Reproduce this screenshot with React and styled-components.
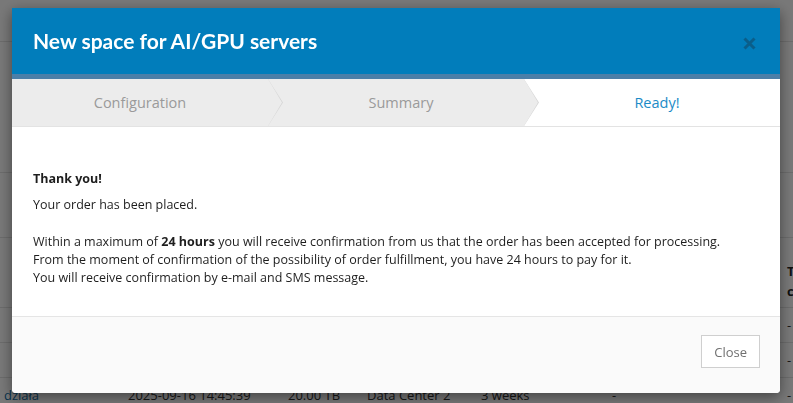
import styled, { createGlobalStyle } from "styled-components";

const GlobalStyle = createGlobalStyle`
    html, body {
        margin: 0;
        padding: 0;
        background: #fff;
        font-family: "Open Sans", "Liberation Sans", sans-serif;
        font-size: 13px;
        color: #333;
    }
`;

/* ---------- page behind the dialog ---------- */

const Page = styled.div`
    width: 793px;
    height: 403px;
    overflow: hidden;
    background: #fff;
`;

const TopBar = styled.div`
    height: 42px;
    border-bottom: 1px solid #e4e4e4;
    box-sizing: border-box;
`;

const Toolbar = styled.div`
    height: 131px;
    border-bottom: 1px solid #e4e4e4;
    box-sizing: border-box;
`;

const Filters = styled.div`
    height: 65px;
    border-bottom: 1px solid #e4e4e4;
    box-sizing: border-box;
`;

const cols = "124px 160px 79px 114px 131px 175px 1fr";

const HeadRow = styled.div`
    display: grid;
    grid-template-columns: ${cols};
    padding: 0 0 6px 4px;
    height: 70px;
    align-items: end;
    font-weight: 700;
    line-height: 20px;
    color: #222;
    border-bottom: 1px solid #e4e4e4;
    box-sizing: border-box;
    white-space: nowrap;
`;

const Row = styled.div`
    display: grid;
    grid-template-columns: ${cols};
    padding-left: 4px;
    height: 34px;
    align-items: center;
    border-bottom: 1px solid #e4e4e4;
    white-space: nowrap;
`;

const Link = styled.span`
    color: #0f6ba3;
`;

/* ---------- dialog ---------- */

const Backdrop = styled.div`
    position: fixed;
    inset: 0;
    background: rgba(0, 0, 0, 0.53);
    padding: 8px 0 0 12px;
`;

const Dialog = styled.div`
    width: 768px;
    background: #fff;
    border-radius: 0 0 4px 4px;
    box-shadow: 0 4px 14px rgba(0, 0, 0, 0.45);
    overflow: hidden;
`;

const Header = styled.div`
    height: 66px;
    background: #017dbb;
    border-bottom: 5px solid #4b7fa8;
    display: flex;
    align-items: center;
    justify-content: space-between;
    padding: 0 24px 0 21px;
`;

const Title = styled.h2`
    margin: 0 0 2px;
    font-family: "Lato", "Liberation Sans", sans-serif;
    font-weight: 700;
    font-size: 21px;
    color: #fff;
`;

const CloseX = styled.button`
    border: 0;
    background: none;
    padding: 0;
    margin-top: 5px;
    display: flex;
    cursor: pointer;
`;

const Steps = styled.div`
    display: flex;
    height: 47px;
    border-bottom: 1px solid #e3e3e3;
`;

const Step = styled.div`
    position: relative;
    box-sizing: border-box;
    flex: 0 0 33.3333%;
    display: flex;
    align-items: center;
    justify-content: center;
    background: ${({ active }) => (active ? "#fff" : "#ececec")};
    color: ${({ active }) => (active ? "#1b8bc7" : "#9a9a9a")};
    font-size: 14.5px;

    & + & {
        padding-left: 10px;
    }

    /* chevron: a border triangle with the fill triangle laid over it */
    &:not(:last-child)::before,
    &:not(:last-child)::after {
        content: "";
        position: absolute;
        top: 0;
        left: 100%;
        height: 100%;
        z-index: 1;
        clip-path: polygon(0 0, 100% 50%, 0 100%);
    }
    &:not(:last-child)::before {
        width: 15px;
        background: #d6d6d6;
    }
    &:not(:last-child)::after {
        width: 14px;
        background: ${({ active }) => (active ? "#fff" : "#ececec")};
    }
`;

const Body = styled.div`
    padding: 43px 21px 29px;
    font-size: 12.5px;
    line-height: 18px;
    color: #1e1e1e;
`;

const Para = styled.p`
    margin: ${({ spaced }) => (spaced ? "19px 0 0" : "0 0 8px")};
`;

const Footer = styled.div`
    border-top: 1px solid #e5e5e5;
    background: #fafafa;
    display: flex;
    justify-content: flex-end;
    padding: 18px 20px 25px;
`;

const Button = styled.button`
    height: 33px;
    padding: 0 12px;
    border: 1px solid #cfcfcf;
    background: #fff;
    color: #707070;
    font-family: "Open Sans", "Liberation Sans", sans-serif;
    font-size: 13px;
    cursor: pointer;
`;

const rows = [
    ["", "", "", "", "", "-", "-"],
    ["", "", "", "", "", "-", "-"],
    ["działa", "2025-09-16 14:45:39", "20.00 TB", "Data Center 2", "3 weeks", "-", "-"],
];

export default function App() {
    return (
        <>
            <GlobalStyle />
            <Page>
                <TopBar />
                <Toolbar />
                <Filters />
                <HeadRow>
                    <span />
                    <span />
                    <span />
                    <span />
                    <span />
                    <span />
                    <span>
                        T<br />c
                    </span>
                </HeadRow>
                {rows.map((r, i) => (
                    <Row key={i}>
                        {r.map((c, j) =>
                            j === 0 ? <Link key={j}>{c}</Link> : <span key={j}>{c}</span>
                        )}
                    </Row>
                ))}
            </Page>

            <Backdrop>
                <Dialog>
                    <Header>
                        <Title>New space for AI/GPU servers</Title>
                        <CloseX aria-label="Close">
                            <svg width="13" height="13" viewBox="0 0 13 13">
                                <path d="M1.5 1.5 L11.5 11.5 M11.5 1.5 L1.5 11.5" stroke="#0a5e8a" strokeWidth="3" />
                            </svg>
                        </CloseX>
                    </Header>
                    <Steps>
                        <Step>Configuration</Step>
                        <Step>Summary</Step>
                        <Step active>Ready!</Step>
                    </Steps>
                    <Body>
                        <Para><b>Thank you!</b></Para>
                        <Para>Your order has been placed.</Para>
                        <Para spaced>
                            Within a maximum of <b>24 hours</b> you will receive confirmation from us that the order has been accepted for processing.
                            <br />
                            From the moment of confirmation of the possibility of order fulfillment, you have 24 hours to pay for it.
                            <br />
                            You will receive confirmation by e-mail and SMS message.
                        </Para>
                    </Body>
                    <Footer>
                        <Button>Close</Button>
                    </Footer>
                </Dialog>
            </Backdrop>
        </>
    );
}
